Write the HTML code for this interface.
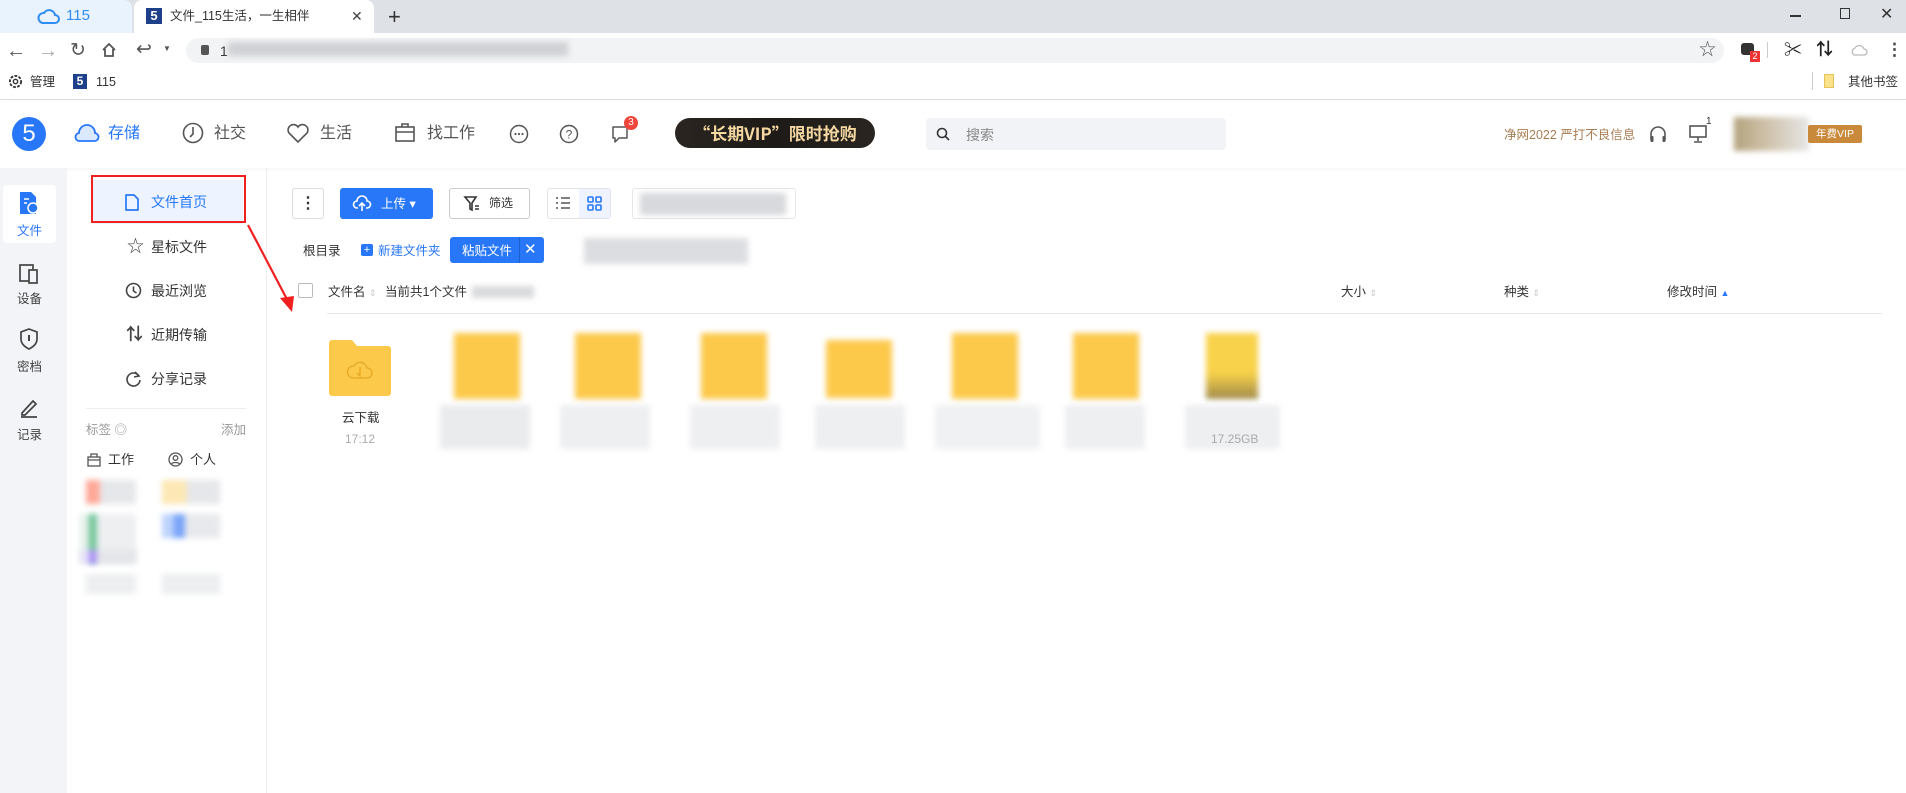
<!DOCTYPE html>
<html><head><meta charset="utf-8"><style>
*{margin:0;padding:0;box-sizing:border-box}
body{width:1906px;height:793px;position:relative;overflow:hidden;background:#fff;font-family:"Liberation Sans","Noto Sans CJK SC",sans-serif;color:#333}
.a{position:absolute}
.t{position:absolute;white-space:nowrap;line-height:1.15}
svg{position:absolute;overflow:visible}
.blur{position:absolute;filter:blur(3px)}
.nav .t{font-size:14px;color:#333}
</style></head><body>
<!-- tab bar -->
<div class="a" style="left:0;top:0;width:1906px;height:33px;background:#dee1e6"></div>
<div class="a" style="left:0;top:0;width:132px;height:33px;background:#e9f3fd;border-radius:0 8px 0 0"></div>
<svg style="left:38px;top:7px" width="22" height="18" viewBox="0 0 22 18"><path d="M5 16h12a4 4 0 0 0 0-8 6 6 0 0 0-11-2A5 5 0 0 0 5 16z" fill="none" stroke="#2f8cf4" stroke-width="2"/></svg>
<div class="t" style="left:66px;top:7px;font-size:15px;color:#2f8cf4">115</div>
<div class="a" style="left:134px;top:0;width:240px;height:33px;background:#fff;border-radius:8px 8px 0 0"></div>
<div class="a" style="left:146px;top:8px;width:16px;height:16px;background:#1e3f8a;color:#fff;font-size:13px;font-weight:bold;text-align:center;line-height:16px">5</div>
<div class="t" style="left:170px;top:9px;font-size:12.5px;color:#333">文件_115生活，一生相伴</div>
<div class="t" style="left:351px;top:8px;font-size:14px;color:#444">✕</div>
<div class="t" style="left:388px;top:4px;font-size:22px;color:#333">+</div>
<div class="a" style="left:1790px;top:15px;width:11px;height:1.5px;background:#333"></div>
<div class="a" style="left:1840px;top:8px;width:10px;height:11px;border:1.5px solid #333"></div>
<div class="t" style="left:1880px;top:6px;font-size:16px;color:#333">✕</div>
<!-- address row -->
<div class="a" style="left:0;top:33px;width:1906px;height:67px;background:#fff;border-bottom:1px solid #dadce0"></div>
<div class="t" style="left:6px;top:40px;font-size:20px;color:#555">←</div>
<div class="t" style="left:38px;top:40px;font-size:20px;color:#aaa">→</div>
<div class="t" style="left:70px;top:40px;font-size:19px;color:#555">↻</div>
<svg style="left:101px;top:42px" width="16" height="16" viewBox="0 0 16 16"><path d="M2 8L8 2l6 6M4 7v7h8V7" fill="none" stroke="#555" stroke-width="1.8"/></svg>
<div class="t" style="left:136px;top:39px;font-size:19px;color:#555">↩</div><div class="t" style="left:163px;top:44px;font-size:8px;color:#555">▼</div>
<div class="a" style="left:186px;top:38px;width:1538px;height:25px;background:#f1f3f4;border-radius:13px"></div>
<div class="a" style="left:201px;top:45px;width:8px;height:10px;background:#555;border-radius:2px"></div>
<div class="t" style="left:220px;top:43px;font-size:14px;color:#333">1</div>
<div class="blur" style="left:228px;top:42px;width:340px;height:14px;background:#cfd1d4"></div>
<div class="t" style="left:1699px;top:40px;font-size:17px;color:#555">☆</div>
<div class="a" style="left:1741px;top:43px;width:13px;height:12px;background:#333;border-radius:3px"></div>
<div class="a" style="left:1750px;top:51px;width:10px;height:11px;background:#e33;color:#fff;font-size:9px;text-align:center;line-height:11px">2</div>
<div class="a" style="left:1767px;top:42px;width:1px;height:16px;background:#ccc"></div>
<div class="t" style="left:1784px;top:40px;font-size:18px;color:#222">✂</div>
<div class="t" style="left:1816px;top:40px;font-size:17px;color:#222;font-weight:bold">⇅</div>
<svg style="left:1850px;top:44px" width="18" height="12" viewBox="0 0 18 12"><path d="M4 11h10a3 3 0 0 0 0-6 5 5 0 0 0-9-1A4 4 0 0 0 4 11z" fill="none" stroke="#bbb" stroke-width="1.3"/></svg>
<div class="t" style="left:1886px;top:40px;font-size:17px;color:#444;font-weight:bold">⋮</div>
<!-- bookmarks -->
<svg style="left:8px;top:74px" width="15" height="15" viewBox="0 0 16 16"><circle cx="8" cy="8" r="6" fill="none" stroke="#333" stroke-width="2" stroke-dasharray="3 1.5"/><circle cx="8" cy="8" r="2.3" fill="none" stroke="#333" stroke-width="1.5"/></svg>
<div class="t" style="left:30px;top:75px;font-size:12.5px;color:#333">管理</div>
<div class="a" style="left:73px;top:74px;width:14px;height:15px;background:#1e3f8a;color:#fff;font-size:12px;font-weight:bold;text-align:center;line-height:15px">5</div>
<div class="t" style="left:96px;top:75px;font-size:12.5px;color:#333">115</div>
<div class="a" style="left:1812px;top:72px;width:1px;height:18px;background:#ccc"></div>
<div class="a" style="left:1824px;top:74px;width:10px;height:14px;background:#fbe28a;border:1px solid #e4c45a"></div>
<div class="t" style="left:1848px;top:75px;font-size:12.5px;color:#333">其他书签</div>
<!-- app header -->
<div class="a" style="left:0;top:101px;width:1906px;height:67px;background:#fff;box-shadow:0 2px 4px rgba(0,0,0,.04)"></div>
<div class="a" style="left:12px;top:117px;width:34px;height:34px;border-radius:50%;background:#2777f8;color:#fff;font-size:24px;text-align:center;line-height:34px">5</div>
<svg style="left:75px;top:121px" width="24" height="24" viewBox="0 0 24 24"><path d="M5 20h14a4 4 0 0 0 1-8A8 8 0 0 0 4 12 4 4 0 0 0 5 20z" fill="#dbe9ff" stroke="#2777f8" stroke-width="1.8"/></svg>
<div class="t" style="left:108px;top:125px;font-size:16px;color:#2777f8">存储</div>
<svg style="left:182px;top:122px" width="22" height="22" viewBox="0 0 22 22"><circle cx="11" cy="11" r="9.5" fill="none" stroke="#555" stroke-width="1.6"/><path d="M11 5v7l-3 3" fill="none" stroke="#555" stroke-width="1.6"/></svg>
<div class="t" style="left:214px;top:125px;font-size:16px;color:#555">社交</div>
<svg style="left:286px;top:122px" width="24" height="22" viewBox="0 0 24 22"><path d="M12 20L3 11a5 5 0 0 1 9-6 5 5 0 0 1 9 6z" fill="none" stroke="#555" stroke-width="1.6"/></svg>
<div class="t" style="left:320px;top:125px;font-size:16px;color:#555">生活</div>
<svg style="left:394px;top:122px" width="22" height="21" viewBox="0 0 22 21"><rect x="2" y="5" width="18" height="14" fill="none" stroke="#555" stroke-width="1.6"/><path d="M8 5V2h6v3M2 10h18" fill="none" stroke="#555" stroke-width="1.6"/></svg>
<div class="t" style="left:427px;top:125px;font-size:16px;color:#555">找工作</div>
<svg style="left:509px;top:124px" width="20" height="20" viewBox="0 0 20 20"><circle cx="10" cy="10" r="8.5" fill="none" stroke="#555" stroke-width="1.5"/><circle cx="6.5" cy="10" r="1.1" fill="#555"/><circle cx="10" cy="10" r="1.1" fill="#555"/><circle cx="13.5" cy="10" r="1.1" fill="#555"/></svg>
<svg style="left:559px;top:124px" width="20" height="20" viewBox="0 0 20 20"><circle cx="10" cy="10" r="8.5" fill="none" stroke="#555" stroke-width="1.5"/><text x="10" y="14.5" font-size="12" text-anchor="middle" fill="#555" font-family="Liberation Sans">?</text></svg>
<svg style="left:610px;top:124px" width="20" height="20" viewBox="0 0 20 20"><path d="M3 3h14v11H9l-4 4v-4H3z" fill="none" stroke="#555" stroke-width="1.5" stroke-linejoin="round"/></svg>
<div class="a" style="left:624px;top:116px;width:14px;height:14px;border-radius:50%;background:#f0453a;color:#fff;font-size:10px;text-align:center;line-height:14px">3</div>
<div class="a" style="left:675px;top:118px;width:200px;height:30px;border-radius:15px;background:linear-gradient(90deg,#2a2520,#1d1a17 50%,#2a2520);color:#f4d7a1;font-size:17px;font-weight:bold;text-align:center;line-height:30px;font-family:'Noto Sans CJK SC',sans-serif">“长期VIP”限时抢购</div>
<div class="a" style="left:926px;top:118px;width:300px;height:32px;border-radius:4px;background:#f1f3f7"></div>
<svg style="left:936px;top:127px" width="14" height="14" viewBox="0 0 14 14"><circle cx="6" cy="6" r="4.5" fill="none" stroke="#333" stroke-width="1.6"/><path d="M9.5 9.5L13 13" stroke="#333" stroke-width="1.6"/></svg>
<div class="t" style="left:966px;top:127px;font-size:14px;color:#888">搜索</div>
<div class="t" style="left:1504px;top:128px;font-size:12.5px;color:#a87d53">净网2022 严打不良信息</div>
<svg style="left:1648px;top:124px" width="20" height="20" viewBox="0 0 20 20"><path d="M3 16v-6a7 7 0 0 1 14 0v6" fill="none" stroke="#555" stroke-width="1.6"/><rect x="2.5" y="12" width="3" height="6" rx="1" fill="#555"/><rect x="14.5" y="12" width="3" height="6" rx="1" fill="#555"/></svg>
<svg style="left:1688px;top:124px" width="20" height="20" viewBox="0 0 20 20"><rect x="2" y="2" width="16" height="11" fill="none" stroke="#555" stroke-width="1.6"/><path d="M10 13v4M6 18h8" stroke="#555" stroke-width="1.6"/></svg>
<div class="t" style="left:1706px;top:116px;font-size:10px;color:#333">1</div>
<div class="blur" style="left:1734px;top:117px;width:75px;height:34px;background:linear-gradient(90deg,#b3a37d,#cdbfa6 40%,#e6e6e6)"></div>
<div class="a" style="left:1808px;top:125px;width:54px;height:18px;background:#c9893a;border-radius:2px;color:#fff;font-size:10.5px;text-align:center;line-height:18px">年费VIP</div>
<!-- left rail -->
<div class="a" style="left:0;top:168px;width:67px;height:625px;background:#f3f4f7"></div>
<div class="a" style="left:3px;top:185px;width:53px;height:58px;background:#fff;border-radius:4px"></div>
<svg style="left:18px;top:191px" width="22" height="24" viewBox="0 0 22 24"><path d="M2 1h11l5 5v17H2z" fill="#2777f8"/><circle cx="15" cy="17" r="5" fill="#2777f8" stroke="#fff" stroke-width="1.5"/><path d="M6 8h5M6 12h3" stroke="#fff" stroke-width="1.5"/></svg>
<div class="t" style="left:17px;top:224px;font-size:12.5px;color:#2777f8">文件</div>
<svg style="left:18px;top:263px" width="22" height="22" viewBox="0 0 22 22"><rect x="2" y="2" width="13" height="16" fill="none" stroke="#444" stroke-width="1.7"/><rect x="11" y="7" width="8" height="13" fill="#f3f4f7" stroke="#444" stroke-width="1.7"/></svg>
<div class="t" style="left:17px;top:292px;font-size:12.5px;color:#444">设备</div>
<svg style="left:19px;top:328px" width="20" height="22" viewBox="0 0 20 22"><path d="M10 1l8 3v7c0 5-4 8-8 10C6 19 2 16 2 11V4z" fill="none" stroke="#444" stroke-width="1.7"/><path d="M10 7v6" stroke="#444" stroke-width="2"/></svg>
<div class="t" style="left:17px;top:360px;font-size:12.5px;color:#444">密档</div>
<svg style="left:18px;top:397px" width="22" height="22" viewBox="0 0 22 22"><path d="M4 16L15 4l3 3L7 18H4z M3 20h16" fill="none" stroke="#444" stroke-width="1.7"/></svg>
<div class="t" style="left:17px;top:428px;font-size:12.5px;color:#444">记录</div>
<!-- nav panel -->
<div class="a" style="left:266px;top:168px;width:1px;height:625px;background:#eee"></div>
<div class="a" style="left:93px;top:180px;width:150px;height:44px;background:#eef4ff"></div>
<div class="a" style="left:91px;top:175px;width:155px;height:48px;border:2px solid #f02020"></div>
<div class="nav">
<svg style="left:125px;top:194px" width="14" height="17" viewBox="0 0 14 17"><path d="M1 1h8l4 4v11H1z" fill="none" stroke="#2777f8" stroke-width="1.7" stroke-linejoin="round"/></svg>
<div class="t" style="left:151px;top:194px;color:#2777f8">文件首页</div>
<div class="t" style="left:127px;top:237px;font-size:17px;color:#444">☆</div>
<div class="t" style="left:151px;top:239px">星标文件</div>
<svg style="left:125px;top:282px" width="17" height="17" viewBox="0 0 17 17"><circle cx="8.5" cy="8.5" r="7" fill="none" stroke="#444" stroke-width="1.6"/><path d="M8.5 4.5v4.5l3 2" fill="none" stroke="#444" stroke-width="1.6"/></svg>
<div class="t" style="left:151px;top:283px">最近浏览</div>
<div class="t" style="left:126px;top:325px;font-size:17px;color:#444;font-weight:bold">⇅</div>
<div class="t" style="left:151px;top:327px">近期传输</div>
<svg style="left:125px;top:370px" width="17" height="17" viewBox="0 0 17 17"><path d="M14 6A6.5 6.5 0 1 0 15 10" fill="none" stroke="#444" stroke-width="1.6"/><path d="M10 2l4 4-5 1" fill="none" stroke="#444" stroke-width="1.6"/></svg>
<div class="t" style="left:151px;top:371px">分享记录</div>
</div>
<div class="a" style="left:86px;top:408px;width:160px;height:1px;background:#eee"></div>
<div class="t" style="left:86px;top:423px;font-size:12.5px;color:#999">标签 ◎</div>
<div class="t" style="left:221px;top:423px;font-size:12.5px;color:#999">添加</div>
<svg style="left:87px;top:453px" width="14" height="14" viewBox="0 0 14 14"><rect x="1" y="4" width="12" height="9" fill="none" stroke="#555" stroke-width="1.3"/><path d="M4 4V1h6v3M1 7h12" fill="none" stroke="#555" stroke-width="1.3"/></svg>
<div class="t" style="left:108px;top:453px;font-size:13px;color:#333">工作</div>
<svg style="left:168px;top:452px" width="15" height="15" viewBox="0 0 15 15"><circle cx="7.5" cy="7.5" r="6.5" fill="none" stroke="#555" stroke-width="1.3"/><circle cx="7.5" cy="6" r="2.3" fill="none" stroke="#555" stroke-width="1.3"/><path d="M3.5 12c1-2 7-2 8 0" fill="none" stroke="#555" stroke-width="1.3"/></svg>
<div class="t" style="left:190px;top:453px;font-size:13px;color:#333">个人</div>
<div class="blur" style="left:86px;top:480px;width:50px;height:24px;background:linear-gradient(90deg,#ffa898 25%,#e6e7ea 30%)"></div>
<div class="blur" style="left:162px;top:480px;width:58px;height:24px;background:linear-gradient(90deg,#fde8b5 40%,#e6e7ea 45%)"></div>
<div class="blur" style="left:80px;top:514px;width:56px;height:48px;background:linear-gradient(90deg,#e4f1ea 15%,#77c79d 15% 30%,#eeeff1 30%)"></div>
<div class="blur" style="left:162px;top:514px;width:58px;height:24px;background:linear-gradient(90deg,#bcd3fb 20%,#7aa5f8 20% 40%,#e8e9ec 40%)"></div>
<div class="blur" style="left:80px;top:550px;width:56px;height:14px;background:linear-gradient(90deg,#e9e3fb 15%,#ae97f7 15% 30%,#e4e5e8 30%)"></div>
<div class="blur" style="left:86px;top:574px;width:50px;height:20px;background:#eceef0"></div>
<div class="blur" style="left:162px;top:574px;width:58px;height:20px;background:#eceef0"></div>
<!-- toolbar -->
<div class="a" style="left:292px;top:188px;width:32px;height:31px;border:1px solid #ddd;border-radius:3px;text-align:center;line-height:29px;font-size:16px;font-weight:bold;color:#333">⋮</div>
<div class="a" style="left:340px;top:188px;width:93px;height:31px;background:#2777f8;border-radius:3px"></div>
<svg style="left:353px;top:195px" width="18" height="17" viewBox="0 0 18 17"><path d="M5 13H4a3.5 3.5 0 0 1 0-7 5 5 0 0 1 10 0 3.5 3.5 0 0 1 0 7h-1" fill="none" stroke="#fff" stroke-width="1.6"/><path d="M9 16V8M6 11l3-3 3 3" fill="none" stroke="#fff" stroke-width="1.6"/></svg>
<div class="t" style="left:381px;top:197px;font-size:12.5px;color:#fff">上传 ▾</div>
<div class="a" style="left:449px;top:188px;width:81px;height:31px;border:1px solid #ccc;border-radius:3px"></div>
<svg style="left:464px;top:196px" width="16" height="15" viewBox="0 0 16 15"><path d="M1 1h11L8 7v7l-2-1V7z" fill="none" stroke="#333" stroke-width="1.6"/><path d="M11 10h4M11 13h4" stroke="#333" stroke-width="1.6"/></svg>
<div class="t" style="left:489px;top:197px;font-size:12px;color:#333">筛选</div>
<div class="a" style="left:547px;top:188px;width:64px;height:31px;border:1px solid #e3e3e3;border-radius:3px"></div>
<div class="a" style="left:579px;top:189px;width:31px;height:29px;background:#eef3ff"></div>
<svg style="left:555px;top:196px" width="16" height="14" viewBox="0 0 16 14"><path d="M1 2h2M1 7h2M1 12h2M6 2h9M6 7h9M6 12h9" stroke="#555" stroke-width="1.5"/></svg>
<svg style="left:587px;top:196px" width="15" height="15" viewBox="0 0 15 15"><rect x="1" y="1" width="5" height="5" rx="1" fill="none" stroke="#2777f8" stroke-width="1.6"/><rect x="9" y="1" width="5" height="5" rx="1" fill="none" stroke="#2777f8" stroke-width="1.6"/><rect x="1" y="9" width="5" height="5" rx="1" fill="none" stroke="#2777f8" stroke-width="1.6"/><rect x="9" y="9" width="5" height="5" rx="1" fill="none" stroke="#2777f8" stroke-width="1.6"/></svg>
<div class="a" style="left:632px;top:188px;width:164px;height:31px;border:1px solid #e6e6e6;border-radius:3px"></div>
<div class="blur" style="left:640px;top:193px;width:146px;height:22px;background:#d8d9dc"></div>
<div class="t" style="left:303px;top:244px;font-size:12.5px;color:#333">根目录</div>
<div class="a" style="left:361px;top:244px;width:12px;height:12px;background:#2777f8;border-radius:2px;color:#fff;font-size:11px;line-height:12px;text-align:center">+</div>
<div class="t" style="left:378px;top:244px;font-size:12.5px;color:#2777f8">新建文件夹</div>
<div class="a" style="left:450px;top:237px;width:94px;height:26px;background:#2777f8;border-radius:3px"></div>
<div class="a" style="left:519px;top:237px;width:1px;height:26px;background:#1a5fd0"></div>
<div class="t" style="left:462px;top:244px;font-size:12.5px;color:#fff">粘贴文件</div>
<div class="t" style="left:524px;top:241px;font-size:15px;color:#fff">✕</div>
<div class="blur" style="left:584px;top:238px;width:164px;height:26px;background:#dcdde0"></div>
<!-- list header -->
<div class="a" style="left:298px;top:283px;width:15px;height:15px;border:1px solid #bbb;border-radius:2px"></div>
<div class="t" style="left:328px;top:285px;font-size:12.5px;color:#333">文件名 <span style="color:#ccc;font-size:9px">⇕</span></div>
<div class="t" style="left:385px;top:285px;font-size:12.5px;color:#333">当前共1个文件</div>
<div class="blur" style="left:472px;top:286px;width:62px;height:12px;background:#d9dadc"></div>
<div class="t" style="left:1341px;top:285px;font-size:12.5px;color:#333">大小 <span style="color:#ccc;font-size:9px">⇕</span></div>
<div class="t" style="left:1504px;top:285px;font-size:12.5px;color:#333">种类 <span style="color:#ccc;font-size:9px">⇕</span></div>
<div class="t" style="left:1667px;top:285px;font-size:12.5px;color:#333">修改时间 <span style="color:#2777f8;font-size:9px">▲</span></div>
<div class="a" style="left:327px;top:313px;width:1555px;height:1px;background:#e8e8e8"></div>
<!-- folders -->
<svg style="left:329px;top:340px" width="62" height="56" viewBox="0 0 62 56"><path d="M3 0h20l5 6h31a3 3 0 0 1 3 3v44a3 3 0 0 1-3 3H3a3 3 0 0 1-3-3V3a3 3 0 0 1 3-3z" fill="#fcc94b"/><path d="M24 38h14a5 5 0 0 0 0-10 7 7 0 0 0-13-2 5 5 0 0 0-1 12z M31 27v9l-3-3" fill="none" stroke="#e6a823" stroke-width="1.3"/></svg>
<div class="t" style="left:342px;top:411px;font-size:12.5px;color:#333">云下载</div>
<div class="t" style="left:345px;top:433px;font-size:12px;color:#aaa">17:12</div>
<div class="blur" style="left:454px;top:333px;width:66px;height:66px;background:#fcc94b"></div>
<div class="blur" style="left:575px;top:333px;width:66px;height:66px;background:#fcc94b"></div>
<div class="blur" style="left:701px;top:333px;width:66px;height:66px;background:#fcc94b"></div>
<div class="blur" style="left:826px;top:340px;width:66px;height:58px;background:#fcc94b"></div>
<div class="blur" style="left:952px;top:333px;width:66px;height:66px;background:#fcc94b"></div>
<div class="blur" style="left:1073px;top:333px;width:66px;height:66px;background:#fcc94b"></div>
<div class="blur" style="left:1206px;top:333px;width:52px;height:66px;background:linear-gradient(#f8d24a 60%,#a18a4a)"></div>
<div class="blur" style="left:440px;top:405px;width:90px;height:44px;background:#eaebed"></div>
<div class="blur" style="left:560px;top:405px;width:90px;height:44px;background:#eeeff1"></div>
<div class="blur" style="left:690px;top:405px;width:90px;height:44px;background:#eeeff1"></div>
<div class="blur" style="left:815px;top:405px;width:90px;height:44px;background:#eeeff1"></div>
<div class="blur" style="left:935px;top:405px;width:105px;height:44px;background:#f0f1f2"></div>
<div class="blur" style="left:1065px;top:405px;width:80px;height:44px;background:#eeeff1"></div>
<div class="blur" style="left:1185px;top:405px;width:95px;height:44px;background:#eeeff1"></div>
<div class="t" style="left:1211px;top:433px;font-size:12px;color:#aaa">17.25GB</div>
<!-- red arrow -->
<svg style="left:240px;top:220px" width="60" height="100" viewBox="0 0 60 100"><path d="M8 5L50 85" stroke="#f02020" stroke-width="2.2"/><path d="M52 92L40 78 54 76z" fill="#f02020"/></svg>
</body></html>
